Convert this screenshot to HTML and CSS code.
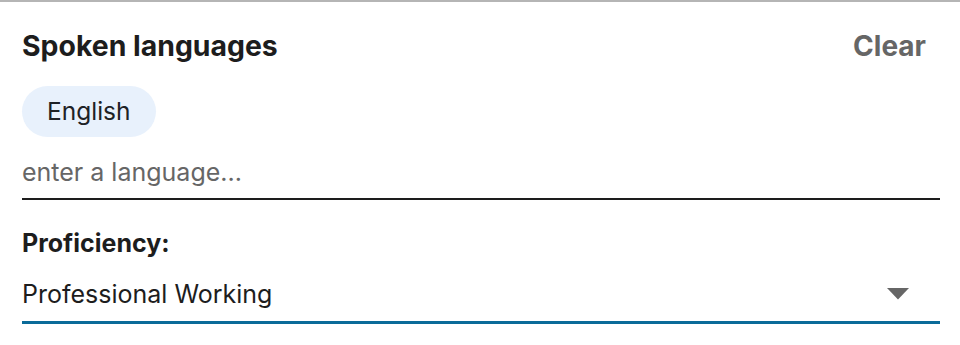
FILE: index.html
```html
<!DOCTYPE html>
<html lang="en">
<head>
<meta charset="utf-8">
<link rel="stylesheet" href="styles.css">
</head>
<body>
<div class="panel">
  <div class="header">
    <h2 class="title">Spoken languages</h2>
    <button class="clear">Clear</button>
  </div>
  <div class="pills">
    <span class="pill">English</span>
  </div>
  <input class="lang-input" type="text" placeholder="enter a language...">
  <label class="label">Proficiency:</label>
  <div class="select">
    <span class="select-value">Professional Working</span>
    <svg class="caret" width="22" height="12" viewBox="0 0 22 12"><path d="M0 0 H22 L11 11.5 Z" fill="#666"/></svg>
  </div>
</div>
</body>
</html>
```
FILE: styles.css
```css
html, body {
  margin: 0;
  padding: 0;
  background: #fff;
}
body {
  font-family: Inter, "Liberation Sans", sans-serif;
  color: #1d1d1d;
}
.panel {
  border-top: 2px solid #b5b5b5;
  padding: 26px 20px 0 22px;
  display: flex;
  flex-direction: column;
}
.header {
  display: flex;
  justify-content: space-between;
  align-items: center;
  height: 36px;
}
.title {
  margin: 0;
  font-size: 28.4px;
  font-weight: 700;
  line-height: 36px;
  color: #1d1d1d;
}
.clear {
  border: 0;
  background: none;
  padding: 0 14px 0 0;
  font-family: inherit;
  font-size: 28px;
  font-weight: 700;
  color: #666;
  line-height: 36px;
}
.pills {
  margin-top: 22px;
  display: flex;
}
.pill {
  height: 51px;
  line-height: 51px;
  padding: 0 25px;
  border-radius: 26px;
  background: #e8f1fc;
  font-size: 24.5px;
  color: #1d2226;
}
.lang-input {
  margin: 17px 0 0;
  height: 46px;
  box-sizing: border-box;
  padding: 0 0 8px 0;
  border: 0;
  border-bottom: 2px solid #1d1d1d;
  font-family: inherit;
  font-size: 25px;
  color: #1d1d1d;
  outline: none;
  width: 100%;
}
.lang-input::placeholder {
  color: #666;
}
.label {
  margin-top: 25px;
  font-size: 25px;
  font-weight: 700;
  line-height: 36px;
  color: #1d1d1d;
}
.select {
  margin-top: 12px;
  display: flex;
  align-items: center;
  justify-content: space-between;
  height: 51px;
  box-sizing: border-box;
  padding-bottom: 6px;
  border-bottom: 3px solid #0a6b99;
}
.select-value {
  font-size: 25px;
  line-height: 36px;
}
.caret {
  margin-right: 31px;
}
```
